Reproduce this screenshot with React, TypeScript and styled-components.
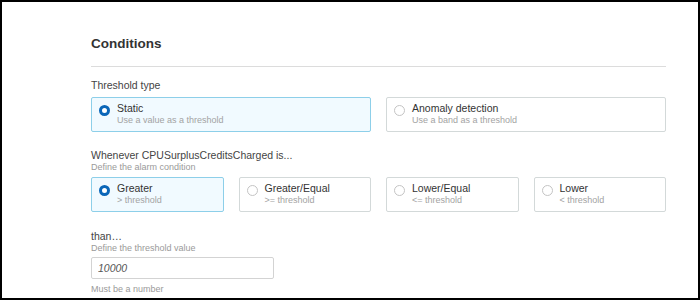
import styled, { createGlobalStyle } from "styled-components";

const GlobalStyle = createGlobalStyle`
    html, body {
        margin: 0;
        padding: 0;
        background: #ffffff;
    }
    * {
        box-sizing: border-box;
    }
`;

const Frame = styled.div`
    width: 700px;
    height: 300px;
    border: 2px solid #000;
    background: #fff;
    overflow: hidden;
    font-family: "Liberation Sans", Arial, sans-serif;
    color: #333;
`;

const Section = styled.div`
    width: 575px;
    margin-left: 89px;
    padding-top: 34px;
`;

const Heading = styled.h2`
    margin: 0;
    font-size: 13.5px;
    line-height: 16px;
    font-weight: 700;
    color: #333;
`;

const Divider = styled.hr`
    margin: 14px 0 0;
    border: none;
    border-top: 1px solid #dcdcdc;
    height: 0;
`;

const Label = styled.div<{ top: number }>`
    margin-top: ${({ top }) => top}px;
    font-size: 10.5px;
    line-height: 13px;
    color: #444;
`;

const Hint = styled.div<{ top?: number }>`
    margin-top: ${({ top }) => top ?? 0}px;
    font-size: 9px;
    line-height: 11px;
    color: #9a9a9a;
`;

const Tiles = styled.div<{ cols: number; top: number }>`
    display: grid;
    grid-template-columns: repeat(${({ cols }) => cols}, 1fr);
    gap: 15px;
    margin-top: ${({ top }) => top}px;
`;

const Tile = styled.div<{ isActive: boolean }>`
    display: flex;
    align-items: flex-start;
    gap: 7px;
    height: 35px;
    padding: 6px 7px 0;
    border: 1px solid ${({ isActive }) => (isActive ? "#8dcfe9" : "#d3d9d9")};
    border-radius: 2px;
    background: ${({ isActive }) => (isActive ? "#f1faff" : "#fff")};
`;

const Radio = styled.span<{ isActive: boolean }>`
    flex: none;
    width: 11px;
    height: 11px;
    margin-top: 1px;
    border-radius: 50%;
    border: ${({ isActive }) => (isActive ? "3.5px solid #0a66b8" : "1px solid #c4c4c4")};
    background: #fff;
`;

const TileText = styled.div`
    display: flex;
    flex-direction: column;
    margin-top: -2px;
`;

const TileTitle = styled.span`
    font-size: 10.5px;
    line-height: 13px;
    color: #333;
`;

const TileSub = styled.span`
    font-size: 9px;
    line-height: 11px;
    color: #a3a3a3;
`;

const ValueInput = styled.input`
    display: block;
    width: 183px;
    height: 22px;
    margin-top: 3px;
    padding: 0 6px;
    border: 1px solid #d3d3d3;
    border-radius: 2px;
    font-family: "Liberation Sans", Arial, sans-serif;
    font-size: 10.5px;
    font-style: italic;
    color: #555;
    background: #fff;
    outline: none;
`;

interface IOption {
    title: string;
    sub: string;
}

const thresholdTypes: IOption[] = [
    { title: "Static", sub: "Use a value as a threshold" },
    { title: "Anomaly detection", sub: "Use a band as a threshold" },
];

const conditions: IOption[] = [
    { title: "Greater", sub: "> threshold" },
    { title: "Greater/Equal", sub: ">= threshold" },
    { title: "Lower/Equal", sub: "<= threshold" },
    { title: "Lower", sub: "< threshold" },
];

function OptionTile({ option, isActive }: { option: IOption; isActive: boolean }) {
    return (
        <Tile isActive={isActive}>
            <Radio isActive={isActive} />
            <TileText>
                <TileTitle>{option.title}</TileTitle>
                <TileSub>{option.sub}</TileSub>
            </TileText>
        </Tile>
    );
}

function App() {
    return (
        <>
            <GlobalStyle />
            <Frame>
                <Section>
                    <Heading>Conditions</Heading>
                    <Divider />
                    <Label top={12}>Threshold type</Label>
                    <Tiles cols={2} top={5}>
                        {thresholdTypes.map((opt, i) => (
                            <OptionTile key={opt.title} option={opt} isActive={i === 0} />
                        ))}
                    </Tiles>
                    <Label top={17}>Whenever CPUSurplusCreditsCharged is...</Label>
                    <Hint>Define the alarm condition</Hint>
                    <Tiles cols={4} top={4}>
                        {conditions.map((opt, i) => (
                            <OptionTile key={opt.title} option={opt} isActive={i === 0} />
                        ))}
                    </Tiles>
                    <Label top={18}>than…</Label>
                    <Hint>Define the threshold value</Hint>
                    <ValueInput defaultValue="10000" />
                    <Hint top={5}>Must be a number</Hint>
                </Section>
            </Frame>
        </>
    );
}

export default App;
